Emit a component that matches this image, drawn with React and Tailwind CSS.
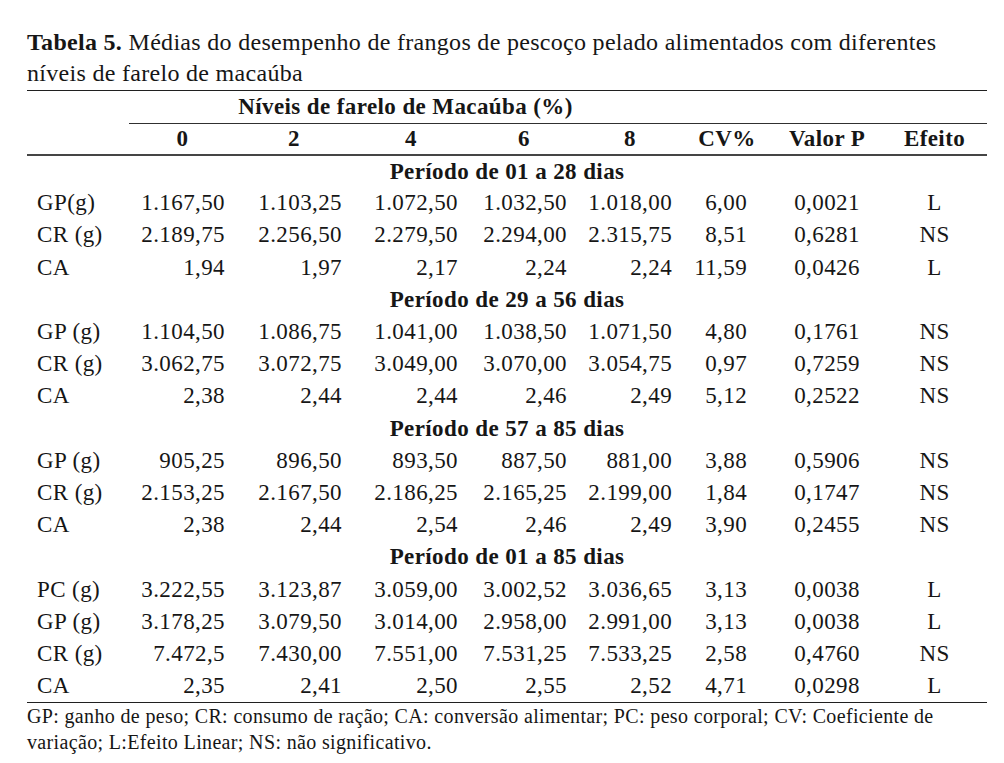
import React from "react";

const cols = [102, 107, 116, 118, 108, 104, 90, 110, 105];
const numPad = ["pr-[11px]", "pr-[10px]", "pr-[12px]", "pr-[11px]", "pr-[10px]"];

const sections = [
  {
    title: "Período de 01 a 28 dias",
    rows: [
      ["GP(g)", "1.167,50", "1.103,25", "1.072,50", "1.032,50", "1.018,00", "6,00", "0,0021", "L"],
      ["CR (g)", "2.189,75", "2.256,50", "2.279,50", "2.294,00", "2.315,75", "8,51", "0,6281", "NS"],
      ["CA", "1,94", "1,97", "2,17", "2,24", "2,24", "11,59", "0,0426", "L"],
    ],
  },
  {
    title: "Período de 29 a 56 dias",
    rows: [
      ["GP (g)", "1.104,50", "1.086,75", "1.041,00", "1.038,50", "1.071,50", "4,80", "0,1761", "NS"],
      ["CR (g)", "3.062,75", "3.072,75", "3.049,00", "3.070,00", "3.054,75", "0,97", "0,7259", "NS"],
      ["CA", "2,38", "2,44", "2,44", "2,46", "2,49", "5,12", "0,2522", "NS"],
    ],
  },
  {
    title: "Período de 57 a 85 dias",
    rows: [
      ["GP (g)", "905,25", "896,50", "893,50", "887,50", "881,00", "3,88", "0,5906", "NS"],
      ["CR (g)", "2.153,25", "2.167,50", "2.186,25", "2.165,25", "2.199,00", "1,84", "0,1747", "NS"],
      ["CA", "2,38", "2,44", "2,54", "2,46", "2,49", "3,90", "0,2455", "NS"],
    ],
  },
  {
    title: "Período de 01 a 85 dias",
    rows: [
      ["PC (g)", "3.222,55", "3.123,87", "3.059,00", "3.002,52", "3.036,65", "3,13", "0,0038", "L"],
      ["GP (g)", "3.178,25", "3.079,50", "3.014,00", "2.958,00", "2.991,00", "3,13", "0,0038", "L"],
      ["CR (g)", "7.472,5", "7.430,00", "7.551,00", "7.531,25", "7.533,25", "2,58", "0,4760", "NS"],
      ["CA", "2,35", "2,41", "2,50", "2,55", "2,52", "4,71", "0,0298", "L"],
    ],
  },
];

export default function App() {
  return (
    <div
      className="w-[1004px] h-[763px] bg-white text-[#161616] pl-[27px] pr-[17px] pt-[27px]"
      style={{ fontFamily: '"Liberation Serif", "Times New Roman", serif' }}
    >
      <p className="text-[24px] leading-[31px] tracking-[0.3px] w-[960px] whitespace-nowrap">
        <b>Tabela 5.</b> Médias do desempenho de frangos de pescoço pelado alimentados com diferentes
        <br />
        níveis de farelo de macaúba
      </p>
      <table className="table-fixed border-collapse w-[960px] mt-[1px] text-[23px] leading-[26px] tracking-[0.4px] border-t-[1.5px] border-[#202020]">
        <colgroup>
          {cols.map((w, i) => (
            <col key={i} style={{ width: w }} />
          ))}
        </colgroup>
        <thead>
          <tr className="h-[32.5px]">
            <th className="p-0"></th>
            <th colSpan={5} className="p-0 font-bold text-center border-b-[1.5px] border-[#303030]">
              Níveis de farelo de Macaúba (%)
            </th>
            <th colSpan={3} className="p-0 border-b-[1.5px] border-[#303030]"></th>
          </tr>
          <tr className="h-[32px] border-b-2 border-[#454545]">
            <th className="p-0"></th>
            <th className="p-0 font-bold text-center">0</th>
            <th className="p-0 font-bold text-center">2</th>
            <th className="p-0 font-bold text-center">4</th>
            <th className="p-0 font-bold text-center">6</th>
            <th className="p-0 font-bold text-center">8</th>
            <th className="p-0 font-bold text-center">CV%</th>
            <th className="p-0 font-bold text-center">Valor P</th>
            <th className="p-0 font-bold text-center">Efeito</th>
          </tr>
        </thead>
        {sections.map((s) => (
          <tbody key={s.title}>
            <tr className="h-[32.2px]">
              <td colSpan={9} className="p-0 text-center font-bold">
                {s.title}
              </td>
            </tr>
            {s.rows.map((r, ri) => (
              <tr key={ri} className="h-[32.2px]">
                <td className="p-0 pl-[10px] text-left whitespace-nowrap">{r[0]}</td>
                {r.slice(1, 6).map((v, i) => (
                  <td key={i} className={"p-0 text-right " + numPad[i]}>
                    {v}
                  </td>
                ))}
                <td className="p-0 text-right pr-[25px]">{r[6]}</td>
                <td className="p-0 text-center">{r[7]}</td>
                <td className="p-0 text-center">{r[8]}</td>
              </tr>
            ))}
          </tbody>
        ))}
      </table>
      <div className="w-[960px] border-t-[1.5px] border-[#202020] text-[20px] leading-[26px] tracking-[0.35px] whitespace-nowrap">
        GP: ganho de peso; CR: consumo de ração; CA: conversão alimentar; PC: peso corporal; CV: Coeficiente de
        <br />
        variação; L:Efeito Linear; NS: não significativo.
      </div>
    </div>
  );
}
